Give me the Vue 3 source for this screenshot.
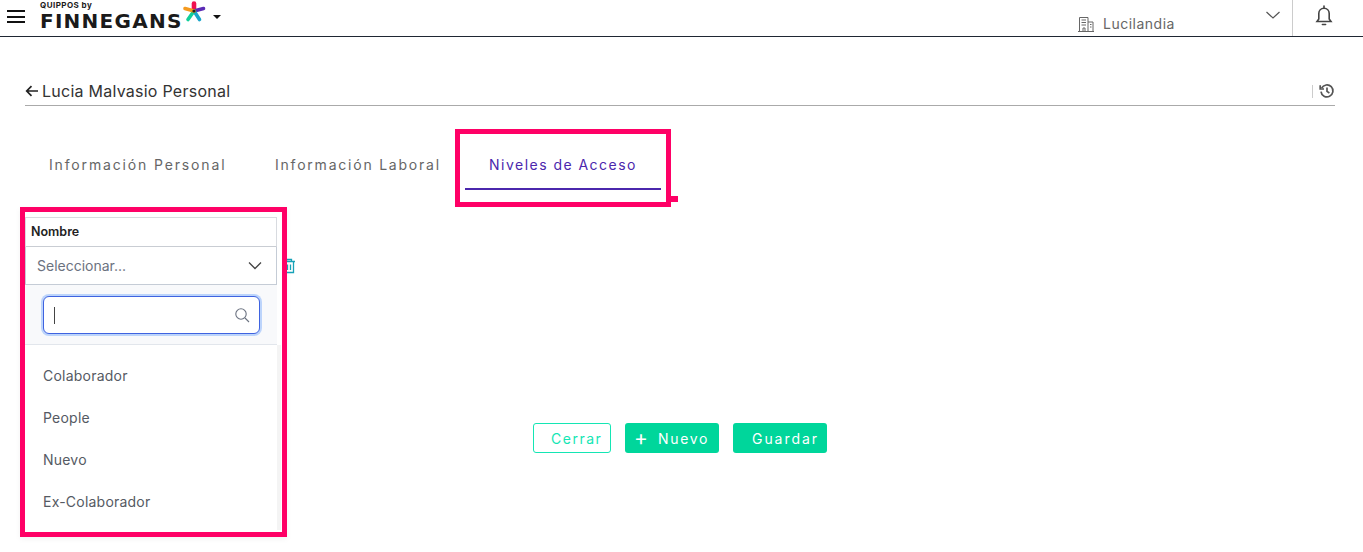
<script setup>
const options = ['Colaborador', 'People', 'Nuevo', 'Ex-Colaborador']
</script>

<template>
  <div class="page">
    <header class="topbar">
      <button class="menu" aria-label="Menú"><span></span><span></span><span></span></button>
      <div class="logo">
        <small>QUIPPOS by</small>
        <strong>FINNEGANS</strong>
        <svg class="star" width="24" height="24" viewBox="0 0 24 24" fill="none" stroke-width="3.6" stroke-linecap="round">
          <path d="M12 11V3.5" stroke="#f0104f" stroke-width="4.6" />
          <path d="M12 11L21.5 8.5" stroke="#5b2bb5" />
          <path d="M12 11L17.5 19.5" stroke="#19a5c9" />
          <path d="M12 11L6 19.5" stroke="#12cf9a" />
          <path d="M12 11L3 8.5" stroke="#f59a1e" />
          <circle cx="12" cy="11" r="1.6" fill="#222" />
        </svg>
      </div>
      <i class="caret"></i>
      <div class="company">
        <svg width="18" height="18" viewBox="0 0 18 18" fill="none" stroke="#666" stroke-width="1">
          <path d="M2.5 16.5V2.5H11V16.5M11 7H16V16.5M1 16.5H17M6 16.5V13H8V16.5" />
          <path d="M4.5 5H9M4.5 7.5H9M4.5 10H9M13 9.5H14.5M13 12H14.5" />
        </svg>
        <span>Lucilandia</span>
      </div>
      <svg class="chev" width="16" height="10" viewBox="0 0 16 10" fill="none" stroke="#555" stroke-width="1.2">
        <path d="M1.5 2L8 8L14.5 2" />
      </svg>
      <div class="bell">
        <svg width="20" height="22" viewBox="0 0 20 22" fill="none" stroke="#444" stroke-width="1.6">
          <path d="M3 16.5H17L15.2 14V8.5C15.2 5.4 13 3.2 10 3.2S4.8 5.4 4.8 8.5V14Z" />
          <path d="M10 1V3M8.4 19.5H11.6" stroke-linecap="round" />
        </svg>
      </div>
    </header>

    <main class="content">
      <div class="title-row">
        <svg width="14" height="12" viewBox="0 0 14 12" fill="none" stroke="#222" stroke-width="1.7">
          <path d="M13 6H2M6.5 1.2L1.7 6L6.5 10.8" />
        </svg>
        <h1>Lucia Malvasio Personal</h1>
        <span class="sep"></span>
        <svg class="history" width="16" height="16" viewBox="0 0 16 16" fill="none" stroke="#555" stroke-width="1.7">
          <path d="M2.6 5.2A6 6 0 1 1 2 8.6" />
          <path d="M1.2 2.2V6H5" />
          <path d="M8 4.6V8.4L10.4 10" />
        </svg>
      </div>

      <nav class="tabs">
        <a class="tab one">Información Personal</a>
        <a class="tab two">Información Laboral</a>
        <a class="tab active">Niveles de Acceso<i class="tick"></i></a>
      </nav>

      <section class="table-wrap">
        <div class="field">
          <div class="th">Nombre</div>
          <div class="select">
            <span>Seleccionar...</span>
            <svg width="14" height="9" viewBox="0 0 14 9" fill="none" stroke="#444" stroke-width="1.3">
              <path d="M1 1.5L7 7.5L13 1.5" />
            </svg>
          </div>
          <div class="dropdown">
            <div class="search-area">
              <div class="search">
                <i class="cursor"></i>
                <svg width="16" height="16" viewBox="0 0 16 16" fill="none" stroke="#6b7280" stroke-width="1.1">
                  <circle cx="7" cy="7" r="5.2" />
                  <path d="M11 11L15 15" />
                </svg>
              </div>
            </div>
            <ul>
              <li v-for="o in options" :key="o">{{ o }}</li>
            </ul>
          </div>
          <i class="mark"></i>
        </div>
        <svg class="trash" width="14" height="16" viewBox="0 0 14 16" fill="none" stroke="#17a2b8" stroke-width="1.3">
          <path d="M1 3.5H13M4.5 3.5V1.5H9.5V3.5M2.5 3.5V14.5H11.5V3.5M5.5 6.5V12M8.5 6.5V12" />
        </svg>
      </section>

      <div class="actions">
        <button class="btn outline">Cerrar</button>
        <button class="btn solid nuevo"><b>+</b>Nuevo</button>
        <button class="btn solid guardar">Guardar</button>
      </div>
    </main>
  </div>
</template>

<style>
html, body { margin: 0; background: #fff; overflow: hidden; }
</style>

<style scoped>
.page {
  width: 1363px;
  height: 552px;
  font-family: "Inter", "Noto Sans", "Liberation Sans", sans-serif;
  color: #333;
  overflow: hidden;
}
.topbar {
  height: 36px;
  border-bottom: 1px solid #1f2733;
  display: flex;
  align-items: flex-start;
  position: relative;
}
.menu {
  width: 18px;
  height: 13px;
  margin: 10px 0 0 7px;
  padding: 0;
  border: 0;
  background: none;
  display: flex;
  flex-direction: column;
  justify-content: space-between;
}
.menu span { height: 2px; background: #111; display: block; }
.logo {
  width: 168px;
  height: 36px;
  margin-left: 15px;
  position: relative;
  color: #1a1a1a;
  flex: none;
}
.logo small {
  position: absolute;
  left: 0;
  top: 0;
  font-size: 8px;
  line-height: 10px;
  font-weight: 700;
  letter-spacing: 0.45px;
  white-space: nowrap;
}
.logo strong {
  position: absolute;
  left: 0;
  top: 9px;
  font-family: "DejaVu Sans", sans-serif;
  font-size: 20px;
  line-height: 24px;
  letter-spacing: 1.25px;
  font-weight: 700;
  white-space: nowrap;
}
.star { position: absolute; left: 142px; top: 0; }
.caret {
  width: 0;
  height: 0;
  margin: 15px 0 0 5px;
  border-left: 4px solid transparent;
  border-right: 4px solid transparent;
  border-top: 4px solid #111;
}
.company {
  display: flex;
  align-items: center;
  gap: 8px;
  font-size: 14px;
  line-height: 18px;
  letter-spacing: 0.5px;
  color: #666;
  position: absolute;
  left: 1077px;
  top: 15px;
}
.chev { position: absolute; left: 1265px; top: 10px; }
.bell {
  position: absolute;
  left: 1292px;
  top: 0;
  height: 36px;
  width: 71px;
  border-left: 1px solid #ccc;
  box-sizing: border-box;
  padding: 5px 0 0 21px;
}
.content { padding: 0 28px 0 25px; position: relative; }
.title-row {
  margin-top: 44px;
  height: 20px;
  padding-bottom: 4px;
  border-bottom: 1px solid #aaa;
  display: flex;
  align-items: center;
  gap: 3px;
}
.title-row h1 {
  margin: 0;
  font-size: 16px;
  font-weight: 400;
  line-height: 20px;
  color: #333;
  letter-spacing: 0.25px;
}
.sep { margin-left: auto; width: 1px; height: 13px; background: #ccc; }
.history { margin: 0 0 0 3px; }
.tabs {
  height: 83px;
  display: flex;
  position: relative;
}
.tab {
  position: absolute;
  top: 50px;
  font-size: 14px;
  line-height: 18px;
  letter-spacing: 1.85px;
  color: #666;
  white-space: nowrap;
}
.tab.two { left: 250px; letter-spacing: 1.78px; }
.tab.one { left: 24px; }
.tab.active {
  left: 440px;
  top: 34px;
  width: 196px;
  height: 32px;
  padding: 16px 0 0;
  text-align: center;
  letter-spacing: 1.47px;
  color: #4b27ad;
  border-bottom: 2px solid #4b27ad;
  box-sizing: content-box;
}
.tab.active::before {
  content: "";
  position: absolute;
  left: -10px;
  top: -11px;
  width: 206px;
  height: 68px;
  border: 5px solid #ff0066;
}
.tick {
  position: absolute;
  left: 205px;
  top: 56px;
  width: 8px;
  height: 6px;
  background: #ff0066;
}
.table-wrap {
  margin-top: 28px;
  height: 206px;
  position: relative;
  display: flex;
}
.field { width: 252px; position: relative; }
.th {
  height: 28px;
  border: 1px solid #d8dbe0;
  border-bottom: 1px solid #c9cdd3;
  font-size: 12.5px;
  font-weight: 600;
  line-height: 28px;
  padding-left: 5px;
  color: #222;
}
.select {
  height: 37px;
  border: 1px solid #c5ccd6;
  border-top: 0;
  display: flex;
  align-items: center;
  justify-content: space-between;
  padding: 0 14px 0 11px;
  font-size: 14px;
  color: #6b7280;
}
.dropdown {
  position: absolute;
  left: 0;
  top: 68px;
  width: 252px;
  height: 245px;
  background: #fff;
  z-index: 2;
}
.search-area {
  height: 48px;
  background: #f8f9fb;
  border-bottom: 1px solid #e2e6ec;
  padding: 11px 0 0 18px;
}
.search {
  width: 217px;
  height: 38px;
  box-sizing: border-box;
  background: #fff;
  border: 1px solid #3f63e0;
  border-radius: 6px;
  box-shadow: 0 0 0 2px #bcd4fb;
  display: flex;
  align-items: center;
  justify-content: space-between;
  padding: 0 9px 0 10px;
}
.cursor { width: 1px; height: 17px; background: #444; }
ul {
  list-style: none;
  margin: 0;
  padding: 10px 0 0;
  height: 175px;
  box-shadow: 4px 0 0 #f4f4f4;
}
li {
  height: 42px;
  line-height: 42px;
  padding-left: 18px;
  font-size: 14px;
  letter-spacing: 0.22px;
  color: #555a63;
}
.mark {
  position: absolute;
  left: -5px;
  top: -10px;
  width: 257px;
  height: 320px;
  border: 5px solid #ff0066;
  box-shadow: 0 2px 6px rgba(0,0,0,.05);
  pointer-events: none;
  z-index: 3;
}
.trash { margin: 41px 0 0 5px; }
.actions {
  display: flex;
  gap: 14px;
  padding-left: 508px;
}
.btn {
  height: 30px;
  box-sizing: border-box;
  border-radius: 3px;
  font-family: inherit;
  font-size: 14px;
  letter-spacing: 1.7px;
  padding: 0;
  display: flex;
  align-items: center;
}
.outline {
  width: 78px;
  background: #fff;
  color: #14e6b4;
  border: 1px solid #14e6b4;
  padding-left: 17px;
  letter-spacing: 1.5px;
}
.solid {
  background: #00d69b;
  color: #fff;
  border: 0;
}
.nuevo { width: 94px; padding-left: 9px; }
.nuevo b { font-size: 21px; font-weight: 400; line-height: 20px; margin-right: 10px; letter-spacing: 0; }
.guardar { width: 94px; padding-left: 19px; letter-spacing: 1.95px; }
</style>
